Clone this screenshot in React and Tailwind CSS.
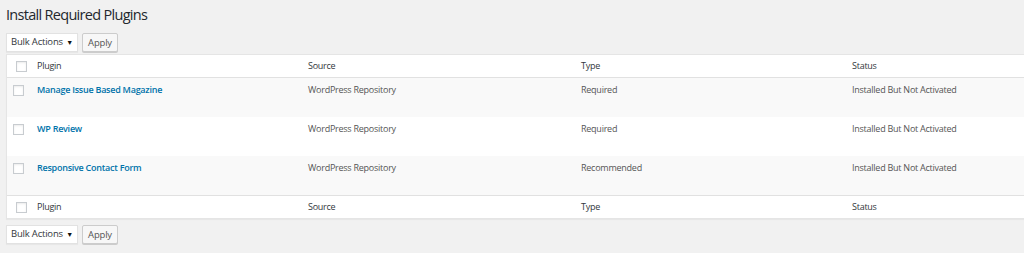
const rows = [
  { name: 'Manage Issue Based Magazine', source: 'WordPress Repository', type: 'Required', status: 'Installed But Not Activated' },
  { name: 'WP Review', source: 'WordPress Repository', type: 'Required', status: 'Installed But Not Activated' },
  { name: 'Responsive Contact Form', source: 'WordPress Repository', type: 'Recommended', status: 'Installed But Not Activated' },
];

const cols = 'grid grid-cols-[30px_271px_273px_271px_271px]';

function Checkbox({ className = '' }) {
  return (
    <span className={`block w-[11px] h-[11px] bg-white border border-[#c8ccd0] shadow-[inset_0_1px_2px_rgba(0,0,0,0.08)] ${className}`} />
  );
}

function BulkBar() {
  return (
    <div className="flex items-center gap-[4px] h-[19px]">
      <div className="relative flex items-center w-[72px] h-[19px] bg-white border border-[#e2e2e2] shadow-[0_1px_1px_rgba(0,0,0,0.04)] pl-[4px] text-[9.5px] tracking-[-0.2px] text-[#32373c]">
        <span>Bulk Actions</span>
        <span className="absolute right-[4px] top-[5px] text-[7px] leading-none text-[#111]">▼</span>
      </div>
      <button
        type="button"
        className="h-[19px] w-[36px] bg-[#f7f7f7] border border-[#cccccc] rounded-[2px] shadow-[0_1px_0_#ccc] text-[9.5px] tracking-[-0.2px] text-[#555] leading-none"
      >
        Apply
      </button>
    </div>
  );
}

function HeadRow({ border }) {
  return (
    <div className={`${cols} h-[23px] items-center text-[9px] tracking-[-0.25px] text-[#32373c] ${border}`}>
      <div className="pl-[9px]"><Checkbox /></div>
      <div>Plugin</div>
      <div>Source</div>
      <div>Type</div>
      <div>Status</div>
    </div>
  );
}

export default function App() {
  return (
    <div className="w-[1024px] h-[253px] bg-[#f1f1f1] overflow-hidden pl-[6px] font-['Open_Sans',sans-serif]">
      <div className="h-[33px] pt-[4px] text-[14.5px] tracking-[-0.7px] leading-[22px] text-[#23282d]">Install Required Plugins</div>
      <BulkBar />
      <div className="mt-[2px] w-[1130px] bg-white border border-[#e5e5e5] shadow-[0_1px_1px_rgba(0,0,0,0.04)]">
        <HeadRow border="border-b border-[#e1e1e1]" />
        {rows.map((r, i) => (
          <div
            key={r.name}
            className={`${cols} h-[39px] pt-[5px] text-[9px] tracking-[-0.25px] leading-[13px] text-[#555] ${i % 2 === 0 ? 'bg-[#f9f9f9]' : 'bg-white'}`}
          >
            <div className="pl-[6px] pt-[2px]"><Checkbox /></div>
            <div>
              <a href="#" className="font-semibold text-[#0073aa]">{r.name}</a>
            </div>
            <div>{r.source}</div>
            <div>{r.type}</div>
            <div>{r.status}</div>
          </div>
        ))}
        <HeadRow border="border-t border-[#e1e1e1]" />
      </div>
      <div className="mt-[6px]">
        <BulkBar />
      </div>
    </div>
  );
}
